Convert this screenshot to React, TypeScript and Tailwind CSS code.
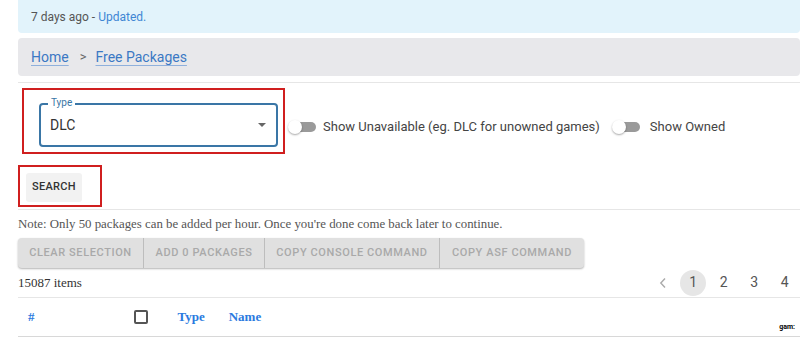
const roboto = { fontFamily: "Roboto, 'Liberation Sans', sans-serif" };

function Toggle() {
  return (
    <div className="relative w-[28px] h-[14px] flex items-center shrink-0">
      <div className="absolute left-[4px] right-0 h-[10px] rounded-full bg-[#9a9a9a]" />
      <div className="absolute left-0 top-0 w-[14px] h-[14px] rounded-full bg-white shadow-[0_1px_2px_rgba(0,0,0,0.35)]" />
    </div>
  );
}

const actions = [
  { label: "Clear selection", w: "w-[126px]" },
  { label: "Add 0 packages", w: "w-[121px]" },
  { label: "Copy console command", w: "w-[175px]" },
  { label: "Copy ASF command", w: "w-[144px]" },
];

export default function App() {
  return (
    <div className="relative w-[800px] h-[338px] overflow-hidden bg-white pl-[18px]" style={roboto}>
      <div className="h-[33px] bg-[#e2f3fb] rounded-b-[4px] flex items-center pl-[13px] text-[12px] text-[#555]">
        7 days ago -&nbsp;<span className="text-[#3f86d4]">Updated.</span>
      </div>

      <div className="mt-[5px] h-[38px] bg-[#e8e8eb] rounded-[4px] flex items-center pl-[13px] text-[14px] text-[#3b78c4]">
        <span className="underline underline-offset-[3px] decoration-[#8fb0dc]">Home</span>
        <span className="ml-[11px] mr-[9px] text-[#666] text-[13px]">&gt;</span>
        <span className="underline underline-offset-[3px] decoration-[#8fb0dc]">Free Packages</span>
      </div>

      <div className="mt-[6px] border-t border-[#e6e6e6]" />

      <div className="flex items-start mt-[5px]">
        <div className="ml-[4px] w-[263px] h-[66px] border-2 border-[#d01f1f] pt-[13px] pl-[15px]">
          <div className="relative w-[239px] h-[44px] border-2 border-[#3a76a6] rounded-[4px] flex items-center pl-[9px] text-[14px] text-[#333]">
            <span className="absolute -top-[8px] left-[7px] px-[3px] bg-white text-[10px] leading-[12px] text-[#3a76a6]">
              Type
            </span>
            DLC
            <div className="absolute right-[10px] top-[18px] w-0 h-0 border-l-[4px] border-r-[4px] border-t-[4px] border-l-transparent border-r-transparent border-t-[#666]" />
          </div>
        </div>
        <div className="ml-[3px] mt-[29px] flex items-center">
          <Toggle />
          <span className="ml-[7px] text-[13px] text-[#444]">Show Unavailable (eg. DLC for unowned games)</span>
          <div className="ml-[12px]">
            <Toggle />
          </div>
          <span className="ml-[10px] text-[13px] text-[#444]">Show Owned</span>
        </div>
      </div>

      <div className="mt-[11px] w-[84px] h-[42px] border-2 border-[#d01f1f] pt-[6px] pl-[6px]">
        <div className="w-[56px] h-[29px] bg-[#f2f2f2] rounded-[3px] flex items-center justify-center text-[11px] font-medium tracking-[0.3px] text-[#333]">
          SEARCH
        </div>
      </div>

      <div className="mt-[2px] border-t border-[#e6e6e6]" />

      <div
        className="mt-[7px] text-[12.85px] leading-[15px] text-[#555]"
        style={{ fontFamily: "'Liberation Serif', serif" }}
      >
        Note: Only 50 packages can be added per hour. Once you're done come back later to continue.
      </div>

      <div className="mt-[6px] flex w-max h-[30px] rounded-[4px] bg-[#e0e0e0] shadow-[0_1px_2px_rgba(0,0,0,0.3)]">
        {actions.map((a, i) => (
          <div
            key={a.label}
            className={`${a.w} flex items-center justify-center uppercase text-[11px] font-medium tracking-[0.6px] text-[#a9a9a9] ${
              i < actions.length - 1 ? "border-r border-[#bdbdbd]" : ""
            }`}
          >
            {a.label}
          </div>
        ))}
      </div>

      <div className="h-[29px] flex items-center">
        <span className="text-[13px] text-[#333]" style={{ fontFamily: "'Liberation Serif', serif" }}>
          15087 items
        </span>
        <div className="ml-auto flex items-center text-[14px] text-[#555]">
          <div className="w-[30px] flex justify-center">
            <svg width="10" height="12" viewBox="0 0 10 12">
              <path d="M7 1.5 2.8 6 7 10.5" fill="none" stroke="#aaa" strokeWidth="1.4" />
            </svg>
          </div>
          {[1, 2, 3, 4].map((n) => (
            <div key={n} className="w-[30.5px] flex justify-center">
              <div
                className={`w-[26px] h-[26px] rounded-full flex items-center justify-center ${
                  n === 1 ? "bg-[#e6e6e6]" : ""
                }`}
              >
                {n}
              </div>
            </div>
          ))}
        </div>
      </div>

      <div className="border-t border-[#e6e6e6]" />

      <div
        className="h-[38px] flex items-center text-[13px] font-bold text-[#2a7ae0]"
        style={{ fontFamily: "'Liberation Serif', serif" }}
      >
        <span className="ml-[10px]">#</span>
        <div className="ml-[99px] w-[14px] h-[14px] border-2 border-[#555] rounded-[2px]" />
        <span className="ml-[30px]">Type</span>
        <span className="ml-[24px]">Name</span>
      </div>

      <div className="border-t border-[#d8d8d8]" />

      <span className="absolute right-[5px] bottom-[7px] text-[7px] font-bold leading-none text-black">gam:</span>
    </div>
  );
}
